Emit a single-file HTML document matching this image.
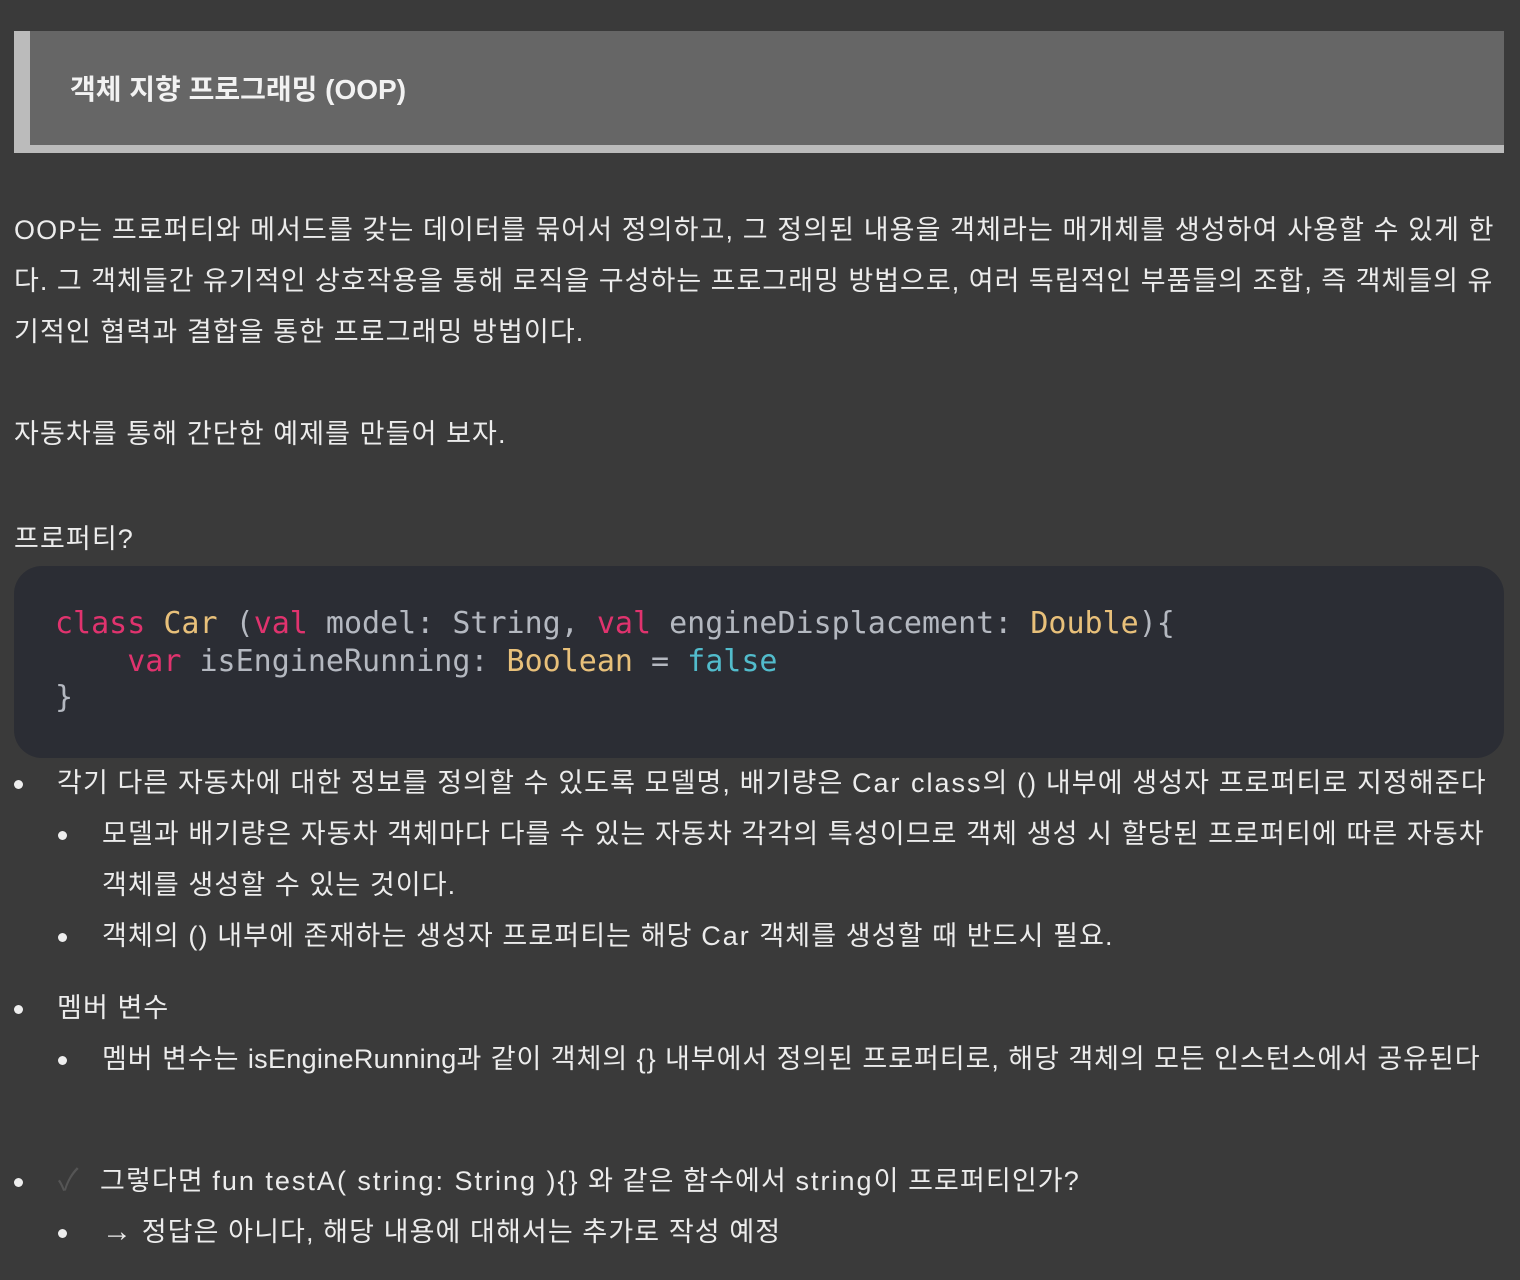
<!DOCTYPE html>
<html><head><meta charset="utf-8"><style>
html,body{margin:0;padding:0;background:#3a3a3a;width:1520px;height:1280px;overflow:hidden;position:relative}
body{font-family:"Liberation Sans","Noto Sans CJK KR","NanumGothic",sans-serif;color:#ececec;font-size:27px}
.l{position:absolute;white-space:nowrap;line-height:40px;height:40px;letter-spacing:1.1px}
.hd{position:absolute;left:14px;top:31px;width:1474px;height:114px;background:#666;border-left:16px solid #bbb;border-bottom:8px solid #bbb}
.hd span{position:absolute;left:40px;top:37px;font-size:28px;font-weight:bold;color:#f2f2f2;letter-spacing:0}
.code{position:absolute;left:14px;top:566px;width:1490px;height:192px;background:#2b2d34;border-radius:28px}
.c{position:absolute;left:55px;white-space:pre;font-family:"DejaVu Sans Mono","Liberation Mono",monospace;font-size:30px;color:#b4b8c0;line-height:38px}
.k{color:#e0336e}.t{color:#e8c07a}.f{color:#52bccc}
.dot{position:absolute;width:9px;height:9px;border-radius:50%;background:#eee}
.w{letter-spacing:2px}
</style></head><body>
<div class="hd"><span>객체 지향 프로그래밍 (OOP)</span></div>
<div class="l" style="left:14px;top:210px">OOP는 프로퍼티와 메서드를 갖는 데이터를 묶어서 정의하고, 그 정의된 내용을 객체라는 매개체를 생성하여 사용할 수 있게 한</div>
<div class="l" style="left:14px;top:261px;letter-spacing:1px">다. 그 객체들간 유기적인 상호작용을 통해 로직을 구성하는 프로그래밍 방법으로, 여러 독립적인 부품들의 조합, 즉 객체들의 유</div>
<div class="l" style="left:14px;top:312px">기적인 협력과 결합을 통한 프로그래밍 방법이다.</div>
<div class="l" style="left:14px;top:414px">자동차를 통해 간단한 예제를 만들어 보자.</div>
<div class="l" style="left:14px;top:519px">프로퍼티?</div>
<div class="code"></div>
<div class="c" style="top:605px"><span class="k">class</span> <span class="t">Car</span> (<span class="k">val</span> model: String, <span class="k">val</span> engineDisplacement: <span class="t">Double</span>){</div>
<div class="c" style="top:643px">    <span class="k">var</span> isEngineRunning: <span class="t">Boolean</span> = <span class="f">false</span></div>
<div class="c" style="top:679px">}</div>
<div class="dot" style="left:14px;top:780px"></div>
<div class="l" style="left:57px;top:763px">각기 다른 자동차에 대한 정보를 정의할 수 있도록 모델명, 배기량은 <span class="w">Car class</span>의 () 내부에 생성자 프로퍼티로 지정해준다</div>
<div class="dot" style="left:58px;top:831px"></div>
<div class="l" style="left:102px;top:814px">모델과 배기량은 자동차 객체마다 다를 수 있는 자동차 각각의 특성이므로 객체 생성 시 할당된 프로퍼티에 따른 자동차</div>
<div class="l" style="left:102px;top:865px">객체를 생성할 수 있는 것이다.</div>
<div class="dot" style="left:58px;top:933px"></div>
<div class="l" style="left:102px;top:916px">객체의 () 내부에 존재하는 생성자 프로퍼티는 해당 <span class="w">Car</span> 객체를 생성할 때 반드시 필요.</div>
<div class="dot" style="left:14px;top:1005px"></div>
<div class="l" style="left:57px;top:988px">멤버 변수</div>
<div class="dot" style="left:58px;top:1056px"></div>
<div class="l" style="left:102px;top:1039px;letter-spacing:0.95px">멤버 변수는 <span style="letter-spacing:0.3px">isEngineRunning</span>과 같이 객체의 {} 내부에서 정의된 프로퍼티로, 해당 객체의 모든 인스턴스에서 공유된다</div>
<div class="dot" style="left:14px;top:1178px"></div>
<div class="l" style="left:58px;top:1161px;font-size:30px;color:#555">✓</div>
<div class="l" style="left:100px;top:1161px">그렇다면 <span class="w">fun testA( string: String ){}</span> 와 같은 함수에서 <span class="w">string</span>이 프로퍼티인가?</div>
<div class="dot" style="left:58px;top:1229px"></div>
<div class="l" style="left:102px;top:1212px"><span style="font-size:30px">→</span> 정답은 아니다, 해당 내용에 대해서는 추가로 작성 예정</div>
</body></html>
